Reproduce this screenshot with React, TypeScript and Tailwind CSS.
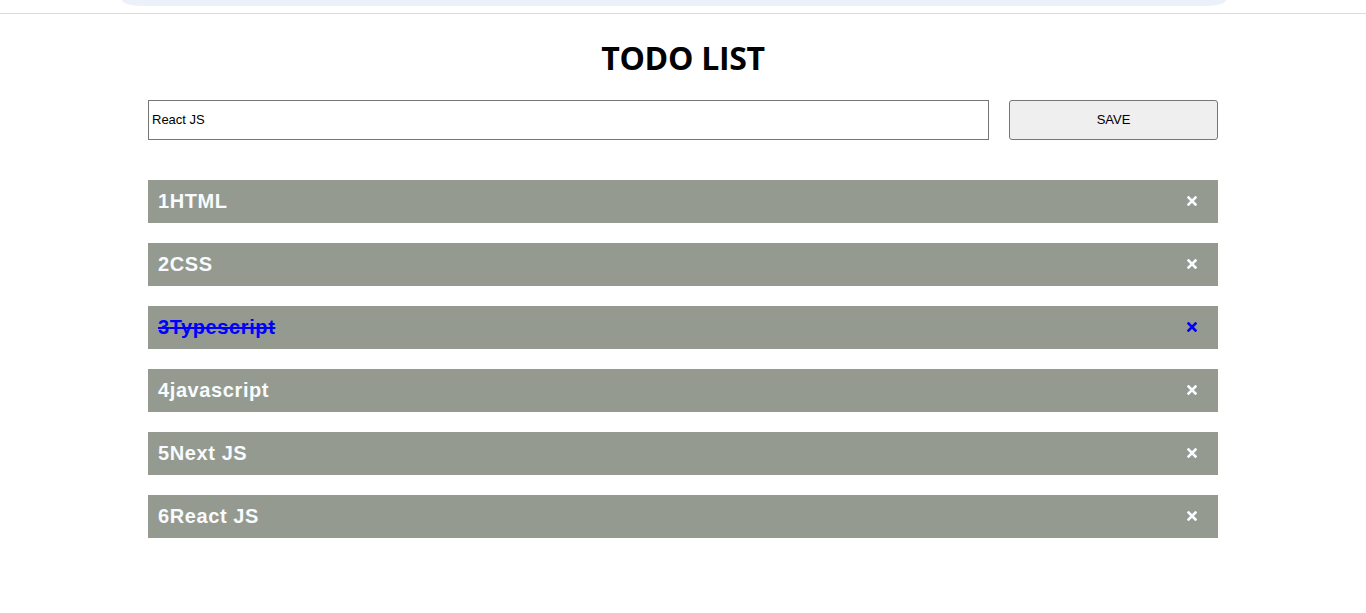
import { useState } from "react";

type Todo = { id: number; text: string; done: boolean };

const initial: Todo[] = [
  { id: 1, text: "HTML", done: false },
  { id: 2, text: "CSS", done: false },
  { id: 3, text: "Typescript", done: true },
  { id: 4, text: "javascript", done: false },
  { id: 5, text: "Next JS", done: false },
  { id: 6, text: "React JS", done: false },
];

function CloseIcon({ className }: { className?: string }) {
  return (
    <svg viewBox="0 0 10 10" className={className} fill="none">
      <path d="M1.5 1.5 L8.5 8.5 M8.5 1.5 L1.5 8.5" stroke="currentColor" strokeWidth="2.6" strokeLinecap="square" />
    </svg>
  );
}

export default function App() {
  const [todos, setTodos] = useState<Todo[]>(initial);
  const [value, setValue] = useState("React JS");

  const toggle = (id: number) =>
    setTodos(prev => prev.map(t => (t.id === id ? { ...t, done: !t.done } : t)));

  const remove = (id: number) => setTodos(prev => prev.filter(t => t.id !== id));

  const save = () => {
    if (!value.trim()) return;
    setTodos(prev => [...prev, { id: prev.length + 1, text: value, done: false }]);
  };

  return (
    <div className="min-h-screen bg-white font-['Liberation_Sans',Arial,sans-serif]">
      {/* browser-ish top strip */}
      <div className="h-[13px] border-b border-[#dcdcdc] pl-[122px] pr-[140px] box-content">
        <div className="h-[6px] rounded-bl-[20px_6px] rounded-br-[20px_6px] bg-[#ecf0f8]"></div>
      </div>

      <div className="mx-[148px] pt-[25px]">
        <h1 className="text-center text-[32px] leading-[38px] font-bold text-black font-['Open_Sans','Noto_Sans',sans-serif] tracking-[-0.3px]">
          TODO LIST
        </h1>

        <div className="mt-[23px] flex gap-[20px]">
          <input
            value={value}
            onChange={e => setValue(e.target.value)}
            className="h-[40px] flex-1 border border-[#767676] px-[3px] pb-[2px] text-[13px] text-black outline-none"
          />
          <button
            onClick={save}
            className="h-[40px] w-[209px] rounded-[3px] border border-[#767676] bg-[#efefef] text-[13px] text-black"
          >
            SAVE
          </button>
        </div>

        <ul className="mt-[40px] flex flex-col gap-[20px]">
          {todos.map((t, i) => (
            <li
              key={t.id}
              className="flex h-[43px] items-center justify-between bg-[#949a8f] pb-[2px] pl-[10px] pr-[21px]"
            >
              <span
                onClick={() => toggle(t.id)}
                className={`cursor-pointer text-[20px] font-bold tracking-[0.6px] ${
                  t.done ? "text-[#0000ff] line-through" : "text-[#f8fbff]"
                }`}
              >
                {i + 1}
                {t.text}
              </span>
              <button onClick={() => remove(t.id)} className={t.done ? "text-[#0000ff]" : "text-[#f8fbff]"}>
                <CloseIcon className="h-[10px] w-[10px]" />
              </button>
            </li>
          ))}
        </ul>
      </div>
    </div>
  );
}
